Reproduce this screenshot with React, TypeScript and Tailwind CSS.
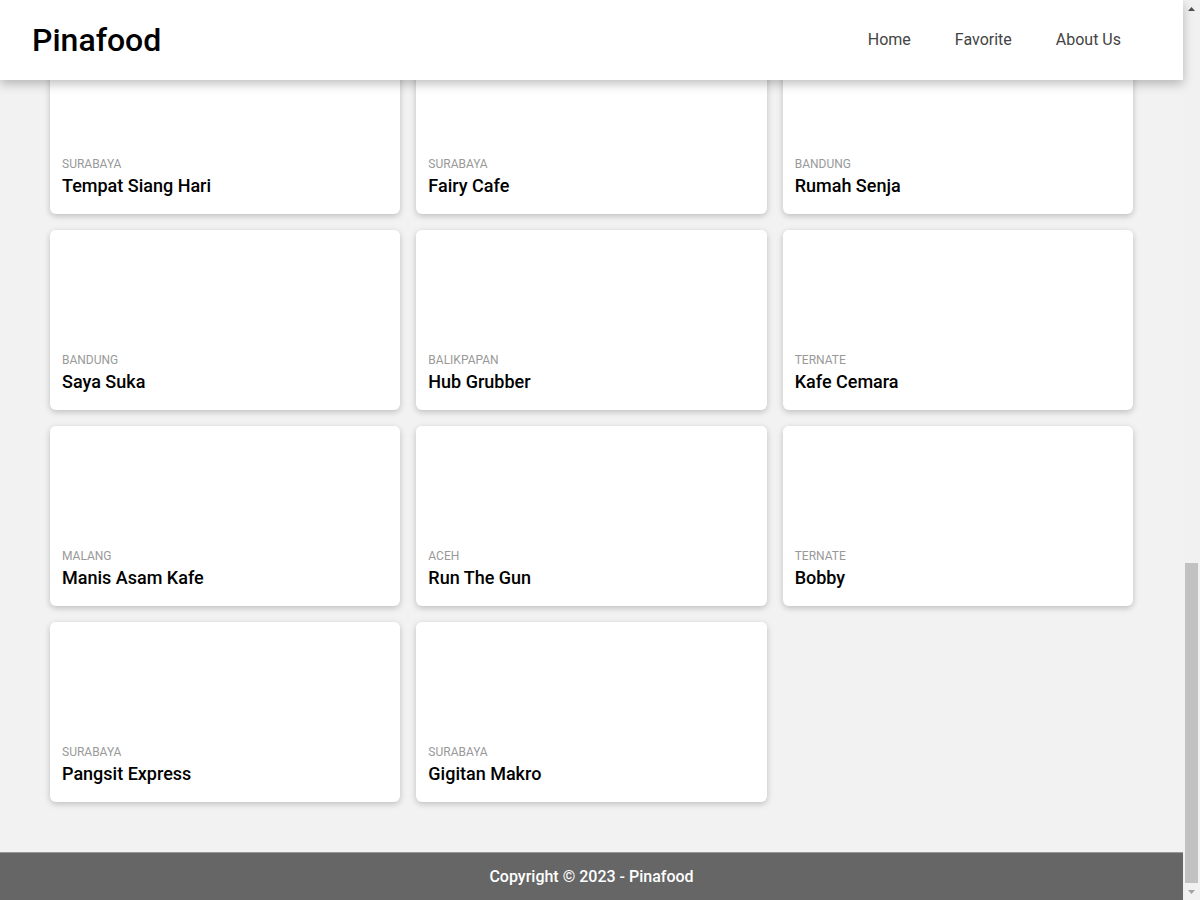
interface Restaurant {
    name: string;
    city: string;
}

// only the part of the list that is on screen once scrolled to the bottom
const restaurants: Restaurant[] = [
    { name: "Tempat Siang Hari", city: "Surabaya" },
    { name: "Fairy Cafe", city: "Surabaya" },
    { name: "Rumah Senja", city: "Bandung" },
    { name: "Saya Suka", city: "Bandung" },
    { name: "Hub Grubber", city: "Balikpapan" },
    { name: "Kafe Cemara", city: "Ternate" },
    { name: "Manis Asam Kafe", city: "Malang" },
    { name: "Run The Gun", city: "Aceh" },
    { name: "Bobby", city: "Ternate" },
    { name: "Pangsit Express", city: "Surabaya" },
    { name: "Gigitan Makro", city: "Surabaya" },
];

const RestaurantCard = ({ item }: { item: Restaurant }) => (
    <article className="bg-white rounded-md shadow-[0_2px_6px_rgba(0,0,0,0.22)] overflow-hidden">
        <div className="h-[122px] bg-white" />
        <div className="px-3 pb-[14px]">
            <p className="text-[12px] leading-4 uppercase text-[#999]">{item.city}</p>
            <h3 className="text-[18px] leading-7 font-medium text-black">{item.name}</h3>
        </div>
    </article>
);

const Scrollbar = () => (
    <div className="w-[17px] h-full bg-[#f1f1f1] flex flex-col items-center">
        <div className="h-[17px] w-full flex items-center justify-center">
            <svg width="7" height="4" viewBox="0 0 7 4"><path d="M0 4 L3.5 0 L7 4 Z" fill="#505050" /></svg>
        </div>
        <div className="flex-1 w-full flex flex-col justify-end px-[2px]">
            <div className="h-[320px] bg-[#c1c1c1]" />
        </div>
        <div className="h-[17px] w-full flex items-center justify-center">
            <svg width="7" height="4" viewBox="0 0 7 4"><path d="M0 0 L7 0 L3.5 4 Z" fill="#a3a3a3" /></svg>
        </div>
    </div>
);

export default function App() {
    return (
        <div className="w-[1200px] h-[900px] flex bg-[#f2f2f2] overflow-hidden" style={{ fontFamily: "Roboto, 'Liberation Sans', sans-serif" }}>
            <div className="flex-1 flex flex-col min-w-0">
                <header className="relative z-10 h-20 shrink-0 bg-white shadow-[0_4px_10px_rgba(0,0,0,0.25)] flex items-center justify-between pl-8 pr-10">
                    <h1 className="text-[32px] font-medium text-black">Pinafood</h1>
                    <nav className="flex">
                        <a className="px-[22px] text-base text-[#444]">Home</a>
                        <a className="px-[22px] text-base text-[#444]">Favorite</a>
                        <a className="px-[22px] text-base text-[#444]">About Us</a>
                    </nav>
                </header>

                <div className="flex-1 min-h-0 overflow-hidden flex flex-col justify-end">
                    <main className="px-[50px] pb-[50px] grid grid-cols-3 gap-4">
                        {restaurants.map((r) => (
                            <RestaurantCard key={r.name} item={r} />
                        ))}
                    </main>
                    <footer className="h-12 shrink-0 bg-[#666] border-t border-[#999] flex items-center justify-center">
                        <p className="text-white text-base font-medium">Copyright © 2023 - Pinafood</p>
                    </footer>
                </div>
            </div>
            <Scrollbar />
        </div>
    );
}
